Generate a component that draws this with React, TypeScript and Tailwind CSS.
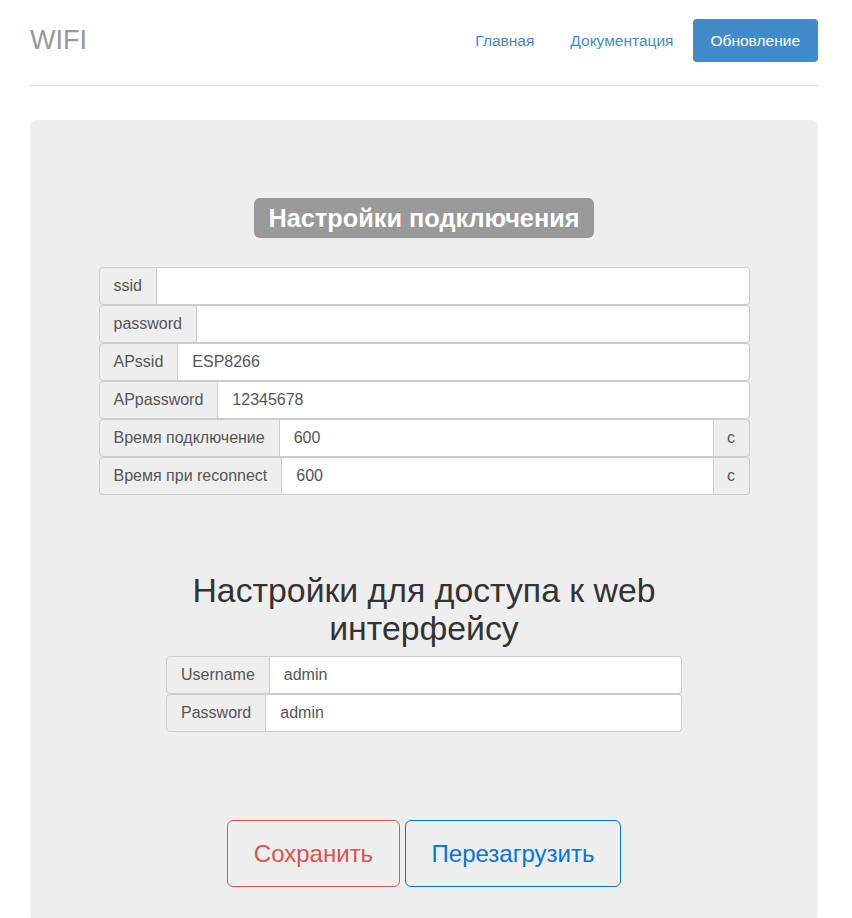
const font = { fontFamily: '"Liberation Sans", Arial, sans-serif' };

type Field = { label: string; value: string; suffix?: string };

const connection: Field[] = [
	{ label: 'ssid', value: '' },
	{ label: 'password', value: '' },
	{ label: 'APssid', value: 'ESP8266' },
	{ label: 'APpassword', value: '12345678' },
	{ label: 'Время подключение', value: '600', suffix: 'с' },
	{ label: 'Время при reconnect', value: '600', suffix: 'с' }
];

const access: Field[] = [
	{ label: 'Username', value: 'admin' },
	{ label: 'Password', value: 'admin' }
];

const InputGroup = ({ field }: { field: Field }) => (
	<div className="flex h-[38px] w-full text-[16px] text-[#555]">
		<span className="flex items-center whitespace-nowrap rounded-l border border-[#ccc] bg-[#eee] px-[14px]">
			{field.label}
		</span>
		<input
			defaultValue={field.value}
			className={`min-w-0 flex-1 border border-l-0 border-[#ccc] bg-white px-[14px] text-[#555] outline-none ${
				field.suffix ? '' : 'rounded-r'
			}`}
			style={font}
		/>
		{field.suffix && (
			<span className="flex w-[36px] items-center justify-center rounded-r border border-l-0 border-[#ccc] bg-[#eee]">
				{field.suffix}
			</span>
		)}
	</div>
);

const App = () => {
	return (
		<div className="min-h-[918px] bg-white" style={font}>
			<div className="ml-[30px] mr-[34px]">
				<div className="flex items-center justify-between border-b border-[#e5e5e5] pb-[23px] pt-[19px]">
					<h3 className="text-[27px] text-[#999]">WIFI</h3>
					<ul className="flex gap-[2px] text-[15.5px]">
						<li>
							<a className="block rounded px-[17px] py-[11px] leading-[21px] text-[#428bca]">
								Главная
							</a>
						</li>
						<li>
							<a className="block rounded px-[17px] py-[11px] leading-[21px] text-[#428bca]">
								Документация
							</a>
						</li>
						<li>
							<a className="block rounded bg-[#428bca] px-[18px] py-[11px] leading-[21px] text-white">
								Обновление
							</a>
						</li>
					</ul>
				</div>

				<div className="mt-[34px] flex min-h-[800px] flex-col items-center rounded-md bg-[#eee] pt-[78px]">
					<h2 className="rounded-md bg-[#999] px-[15px] py-[6px] text-[25.3px] font-bold leading-[28px] text-white">
						Настройки подключения
					</h2>
					<div className="mt-[29px] flex w-[651px] flex-col">
						{connection.map(field => (
							<InputGroup key={field.label} field={field} />
						))}
					</div>

					<h2 className="mt-[76px] w-[500px] text-center text-[33.8px] leading-[38px] text-[#333]">
						Настройки для доступа к web интерфейсу
					</h2>
					<div className="mt-[9px] flex w-[516px] flex-col">
						{access.map(field => (
							<InputGroup key={field.label} field={field} />
						))}
					</div>

					<div className="mt-[88px] flex gap-[5px]">
						<button className="h-[67px] w-[173px] rounded-md border border-[#d9534f] text-[24px] text-[#d9534f]">
							Сохранить
						</button>
						<button className="h-[67px] w-[216px] rounded-md border border-[#0275d8] text-[24px] text-[#0275d8]">
							Перезагрузить
						</button>
					</div>
				</div>
			</div>
		</div>
	);
};

export default App;
